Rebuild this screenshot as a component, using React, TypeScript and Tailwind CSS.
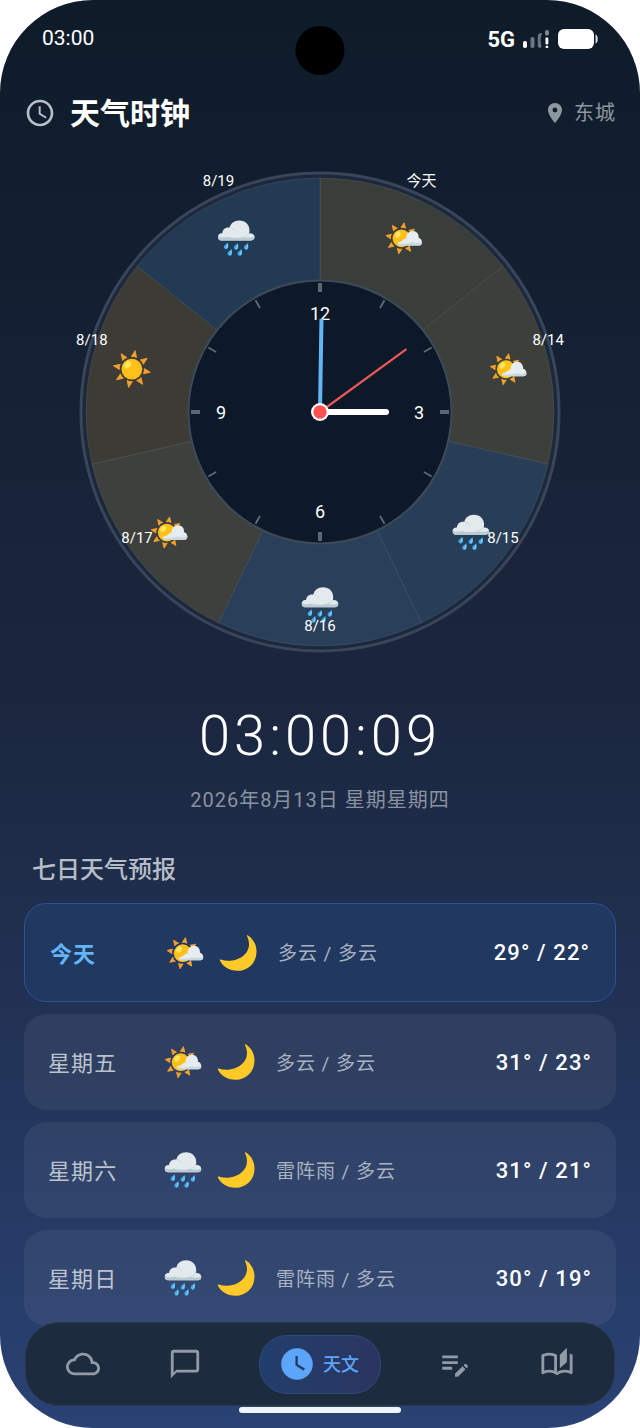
import type { ReactNode } from "react";
import {
  MdAccessTime,
  MdChatBubbleOutline,
  MdCloudQueue,
  MdEditNote,
  MdLocationOn,
  MdOutlineAutoStories,
  MdWatchLater,
} from "react-icons/md";

type Weather = "sunny" | "partly" | "rain";

const RAY_ANGLES = [10, 55, 100, 145, 190, 235, 280, 325];

function Sun({ cx, cy, r, inner, tip, half }: { cx: number; cy: number; r: number; inner: number; tip: number; half: number }) {
  return (
    <g>
      {RAY_ANGLES.map((angle) => (
        <path
          key={angle}
          d={`M${inner} ${-half}L${tip} 0L${inner} ${half}Q${inner + 1} 0 ${inner} ${-half}Z`}
          transform={`translate(${cx} ${cy}) rotate(${angle})`}
          fill="#f9a130"
          stroke="#f9a130"
          strokeWidth="0.8"
          strokeLinejoin="round"
        />
      ))}
      <circle cx={cx} cy={cy} r={r} fill="#ffc019" />
      <ellipse
        cx={cx - r * 0.4}
        cy={cy - r * 0.42}
        rx={r * 0.28}
        ry={r * 0.38}
        fill="#fff176"
        opacity="0.75"
        transform={`rotate(40 ${cx - r * 0.4} ${cy - r * 0.42})`}
      />
    </g>
  );
}

function WeatherShape({ kind }: { kind: Weather }) {
  if (kind === "sunny") {
    return <Sun cx={20} cy={20} r={10.4} inner={12.2} tip={18.7} half={2.6} />;
  }
  if (kind === "partly") {
    return (
      <g>
        <Sun cx={17.7} cy={20.2} r={8.9} inner={10.6} tip={15.8} half={2.3} />
        <path
          d="M16 27.3C13.4 27.3 13 24.4 15.3 24C18.3 23.6 19.2 21 22.6 20.2C22.3 15.8 25.2 12.8 29 12.8C33 12.8 35.2 16 35 19.8C37 20.2 38.3 22 38.3 24.3C38.3 26.2 37.2 27.3 35.5 27.3Z"
          fill="#e6edf1"
        />
        <path
          d="M14.3 25.3C19 26 26 25.4 29 24C31.5 25.2 35 25.2 38.2 23.6C38.5 26 37.2 27.3 35.5 27.3H16C15 27.3 14.2 26.5 14.3 25.3Z"
          fill="#cbd9df"
        />
      </g>
    );
  }
  return (
    <g>
      <path
        d="M5 22.3C2.8 22.3 1.7 20.8 1.7 18.8C1.7 16.3 3.5 14.8 6 15.1C6.2 11.5 9.2 8.9 13.4 9.6C14.2 5.2 18 2.3 23 2.3C29 2.3 33.2 6.5 33.2 12C33.2 13.2 33.1 14.2 32.8 15.1C36 14.8 38.3 16.5 38.3 19C38.3 21 37 22.3 35 22.3Z"
        fill="#e3eaed"
      />
      <path d="M13.4 9.6C16 9.7 17.6 10.8 18.5 12.5M32.8 15.1C31.8 17 30 18 28 18.2" fill="none" stroke="#c9d3d8" strokeWidth="0.9" strokeLinecap="round" />
      <path
        d="M1.9 17.8C4 19.8 8 19.6 11 18.6C15 20.2 22 20 27 18.8C31 19.8 35.5 19.8 38.2 18.2C38.6 20.8 37 22.3 35 22.3H5C3 22.3 1.7 20.8 1.9 17.8Z"
        fill="#bccbd1"
      />
      {[
        [10.3, 27.7],
        [20.3, 28.3],
        [30.3, 28.3],
        [14, 34.3],
        [24, 34.3],
      ].map(([x, y]) => (
        <g key={`${x}-${y}`} transform={`translate(${x} ${y}) rotate(24)`}>
          <path d="M0 -3.7C1 -1.6 2.2 -0.2 2.2 1.2A2.2 2.2 0 0 1 -2.2 1.2C-2.2 -0.2 -1 -1.6 0 -3.7Z" fill="#3fa9ec" />
          <path d="M0.2 -1.5C1.2 0 1.2 1.2 0.6 2" fill="none" stroke="#9be0fb" strokeWidth="0.9" strokeLinecap="round" />
        </g>
      ))}
    </g>
  );
}

function WeatherIcon({ kind }: { kind: Weather }) {
  return (
    <svg viewBox="0 0 40 40" className="size-10 shrink-0" aria-hidden="true">
      <WeatherShape kind={kind} />
    </svg>
  );
}

function MoonIcon() {
  return (
    <svg viewBox="0 0 40 40" className="size-10 shrink-0" aria-hidden="true">
      <path
        d="M29.7 2.3C35.5 6 38.5 12 38.5 18.5C38.5 29.5 30.5 37.8 19.5 37.8C11 37.8 4.5 33.5 1.8 27.3C1.6 26.6 2.2 26.3 2.8 26.6C17 31.5 37.5 21 29 3C28.7 2.4 29.1 1.9 29.7 2.3Z"
        fill="#ffc928"
      />
    </svg>
  );
}

const CX = 296;
const CY = 254;

function polar(radius: number, degrees: number): [number, number] {
  const rad = (degrees * Math.PI) / 180;
  return [CX + radius * Math.sin(rad), CY - radius * Math.cos(rad)];
}

const SEGMENTS: { label: string; kind: Weather; fill: string }[] = [
  { label: "今天", kind: "partly", fill: "#3a3e3a" },
  { label: "8/14", kind: "partly", fill: "#3c3f3a" },
  { label: "8/15", kind: "rain", fill: "#283e57" },
  { label: "8/16", kind: "rain", fill: "#293f5a" },
  { label: "8/17", kind: "partly", fill: "#3e403d" },
  { label: "8/18", kind: "sunny", fill: "#3c3b35" },
  { label: "8/19", kind: "rain", fill: "#233a53" },
];

const STEP = 360 / 7;

function Dial() {
  const [minuteX, minuteY] = polar(93, 0.9);
  const [secondX, secondY] = polar(106, 54);
  return (
    <svg viewBox="0 0 592 508" className="mx-auto block w-full max-w-[592px]" role="img" aria-label="天气时钟">
      <circle cx={CX} cy={CY} r="239" fill="#1c293d" stroke="#394559" strokeWidth="3" />
      {SEGMENTS.map((s, i) => {
        const [x1, y1] = polar(234, i * STEP);
        const [x2, y2] = polar(234, (i + 1) * STEP);
        return (
          <path
            key={s.label}
            d={`M${CX} ${CY}L${x1} ${y1}A234 234 0 0 1 ${x2} ${y2}Z`}
            fill={s.fill}
            stroke="#ffffff"
            strokeOpacity="0.08"
            strokeWidth="1"
          />
        );
      })}
      <circle cx={CX} cy={CY} r="131.5" fill="#0d1928" stroke="#3d4a5a" strokeWidth="2" />
      {Array.from({ length: 12 }, (_, i) => {
        const major = i % 3 === 0;
        const [x1, y1] = polar(129, i * 30);
        const [x2, y2] = polar(120, i * 30);
        return <line key={i} x1={x1} y1={y1} x2={x2} y2={y2} stroke="#5d6874" strokeWidth={major ? 4 : 2} />;
      })}
      <g className="font-['Roboto']" fill="#ffffff" fontSize="18" textAnchor="middle">
        {[12, 3, 6, 9].map((n) => {
          const [x, y] = polar(99, n * 30);
          return (
            <text key={n} x={x} y={y + 7}>
              {n}
            </text>
          );
        })}
      </g>
      {SEGMENTS.map((s, i) => {
        const [x, y] = polar(193, (i + 0.5) * STEP);
        return (
          <g key={s.label} transform={`translate(${x - 20} ${y - 20})`}>
            <WeatherShape kind={s.kind} />
          </g>
        );
      })}
      <g className="font-['Roboto','Noto_Sans_CJK_SC',sans-serif]" fill="#ffffff" fontSize="15" textAnchor="middle">
        {SEGMENTS.map((s, i) => {
          const [x, y] = polar(234, (i + 0.5) * STEP);
          return (
            <text key={s.label} x={x} y={y - 15}>
              {s.label}
            </text>
          );
        })}
      </g>
      <line x1={CX} y1={CY} x2={CX + 66} y2={CY} stroke="#ffffff" strokeWidth="6" strokeLinecap="round" />
      <line x1={CX} y1={CY} x2={minuteX} y2={minuteY} stroke="#64b5f6" strokeWidth="4" />
      <line x1={CX} y1={CY} x2={secondX} y2={secondY} stroke="#ea5859" strokeWidth="2.2" strokeLinecap="round" />
      <circle cx={CX} cy={CY} r="9" fill="#ffffff" />
      <circle cx={CX} cy={CY} r="6.7" fill="#ff5252" />
    </svg>
  );
}

function StatusBar() {
  return (
    <div className="relative flex h-[78px] items-center justify-between px-[42px] text-white">
      <span className="text-[21px]">03:00</span>
      <div className="absolute top-[26px] left-1/2 size-[49px] -translate-x-1/2 rounded-full bg-black" />
      <div className="flex items-center gap-2">
        <span className="text-[22px] font-bold">5G</span>
        <svg width="27" height="18" viewBox="0 0 27 18" aria-hidden="true">
          <rect x="0" y="11" width="4" height="7" rx="1.8" fill="#ffffff" />
          <rect x="7.5" y="7" width="4" height="11" rx="1.8" fill="#6d7680" />
          <path d="M19 3C16.5 2.6 14.8 4 14.8 6.5V16C14.8 18 18.5 18.5 18.5 16.5C17.3 12 17.3 8 19 3Z" fill="#6d7680" />
          <rect x="22" y="0" width="4" height="5.5" rx="1.8" fill="#7d868f" />
          <rect x="22.5" y="7.5" width="2.8" height="7" rx="1" fill="#ffffff" />
          <rect x="22.5" y="15.7" width="2.8" height="2.3" rx="1" fill="#ffffff" />
        </svg>
        <svg width="40" height="20" viewBox="0 0 40 20" aria-hidden="true">
          <rect x="0" y="0" width="36" height="20" rx="6" fill="#ffffff" />
          <path d="M37.5 5.5C40.5 6 40.5 14 37.5 14.5Z" fill="#d5d9dd" />
        </svg>
      </div>
    </div>
  );
}

type Day = { name: string; kind: Weather; text: string; temp: string; today?: boolean };

const DAYS: Day[] = [
  { name: "今天", kind: "partly", text: "多云 / 多云", temp: "29° / 22°", today: true },
  { name: "星期五", kind: "partly", text: "多云 / 多云", temp: "31° / 23°" },
  { name: "星期六", kind: "rain", text: "雷阵雨 / 多云", temp: "31° / 21°" },
  { name: "星期日", kind: "rain", text: "雷阵雨 / 多云", temp: "30° / 19°" },
];

function DayRow({ day }: { day: Day }) {
  return (
    <li
      className={
        day.today
          ? "flex h-[99px] items-center rounded-[22px] border border-[#2a539a] bg-[#213861] px-[25px]"
          : "flex h-24 items-center rounded-[22px] bg-white/6 px-6"
      }
    >
      <span
        className={
          day.today
            ? "w-[115px] shrink-0 pt-1 text-[22px] leading-8 font-bold tracking-wider text-[#64b5f6]"
            : "w-[115px] shrink-0 pt-1 text-[22px] leading-8 tracking-wider text-[#bcc3cf]"
        }
      >
        {day.name}
      </span>
      <span className="flex gap-[13px]">
        <WeatherIcon kind={day.kind} />
        <MoonIcon />
      </span>
      <span className="ml-5 grow pt-1 text-[19px] tracking-wider text-[#a9b2c1]">{day.text}</span>
      <span className="text-[22px] font-medium tracking-wider text-white">{day.temp}</span>
    </li>
  );
}

function NavButton({ label, children }: { label: string; children: ReactNode }) {
  return (
    <button type="button" aria-label={label} className="flex h-14 w-14 items-center justify-center text-[34px] text-[#909ba6]">
      {children}
    </button>
  );
}

export default function App() {
  return (
    <div className="bg-white font-['Roboto','Noto_Sans_CJK_SC',sans-serif]">
      <div className="relative min-h-screen overflow-hidden rounded-[93px] bg-linear-to-b from-[#0e1b29] via-[#1b273f] to-[#2a4274] pb-[102px]">
        <StatusBar />
        <header className="flex h-[70px] items-center justify-between px-6">
          <div className="flex items-center gap-[14px]">
            <MdAccessTime className="size-8 text-[#b7c0c9]" />
            <h1 className="text-[30px] font-bold text-white">天气时钟</h1>
          </div>
          <div className="flex items-center gap-[7px] text-[#8e979f]">
            <MdLocationOn className="size-6" />
            <span className="text-[20px] tracking-wider">东城</span>
          </div>
        </header>
        <main className="px-6 pt-[10px]">
          <Dial />
          <div className="text-center">
            <p className="mt-[38px] text-[56px] leading-[64px] font-light tracking-[4px] text-white">03:00:09</p>
            <p className="mt-[18px] text-[20px] leading-7 tracking-wider text-[#8a92a0]">2026年8月13日 星期星期四</p>
          </div>
          <h2 className="mt-10 pl-2 text-[24px] leading-8 font-medium text-[#b7bdc7]">七日天气预报</h2>
          <ul className="mt-[17px] flex flex-col gap-3">
            {DAYS.map((day) => (
              <DayRow key={day.name} day={day} />
            ))}
          </ul>
        </main>
        <nav className="absolute inset-x-[25px] bottom-[22px] flex h-[84px] items-center justify-between rounded-[34px] border border-[#2c3a48] bg-[#1c2b3d] px-[29px]">
          <NavButton label="天气">
            <MdCloudQueue />
          </NavButton>
          <NavButton label="消息">
            <MdChatBubbleOutline />
          </NavButton>
          <button
            type="button"
            aria-current="page"
            className="flex h-[59px] w-[122px] items-center gap-[7px] rounded-[28px] border border-[#2f4a78] bg-linear-to-r from-[#213e6c] to-[#2b3560] pl-[18px] text-[18px] font-medium text-[#5ca5fb]"
          >
            <MdWatchLater className="size-[38px]" />
            天文
          </button>
          <NavButton label="笔记">
            <MdEditNote />
          </NavButton>
          <NavButton label="阅读">
            <MdOutlineAutoStories />
          </NavButton>
        </nav>
        <div className="absolute bottom-[15px] left-1/2 h-[6px] w-[162px] -translate-x-1/2 rounded-full bg-[#f1f4f9]" />
      </div>
    </div>
  );
}
